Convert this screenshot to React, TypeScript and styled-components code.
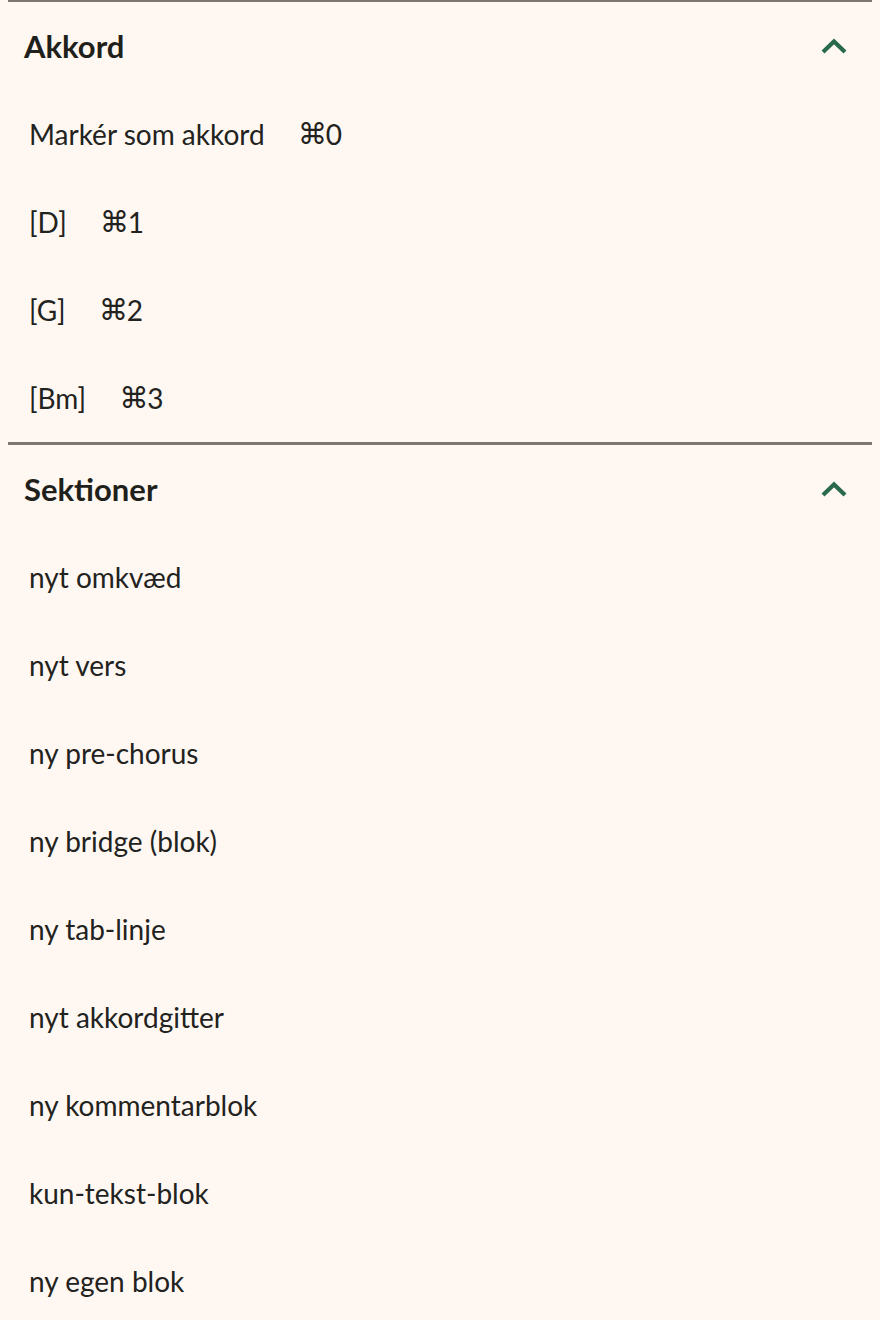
import React from 'react'
import styled, { createGlobalStyle } from 'styled-components'

const GlobalStyle = createGlobalStyle`
  html, body {
    background: #fff8f2;
  }
  body {
    margin: -1px 8px 0;
    font-family: Lato, "Noto Sans", "DejaVu Sans", sans-serif;
    color: #1f1f1b;
  }
`

const Section = styled.section`
  border-top: 3px solid #7d776f;
`

const Header = styled.button`
  display: flex;
  align-items: center;
  justify-content: space-between;
  width: 100%;
  height: 88px;
  padding: 0 24px 0 16px;
  border: none;
  background: transparent;
  font-family: inherit;
  font-size: 31px;
  font-weight: 700;
  color: #1f1f1b;
  cursor: pointer;
`

const List = styled.ul`
  list-style: none;
  margin: 0;
  padding: 0;
`

const Item = styled.li`
  display: flex;
  align-items: center;
  gap: 33px;
  height: 88px;
  padding-left: 21px;
  font-size: 28px;
  color: #222220;
`

const Shortcut = styled.span`
  display: inline-flex;
  align-items: center;
`

const Cmd = styled.span`
  font-family: "DejaVu Sans", sans-serif;
  font-size: 29px;
  line-height: 1;
  margin-right: -1px;
`

const Chevron = () => (
  <svg width="28" height="16" viewBox="0 0 28 16" fill="none">
    <polyline points="3,14 14,3.5 25,14" stroke="#2a6a4c" strokeWidth="4.2" strokeLinejoin="miter" />
  </svg>
)

type Entry = { label: string; key?: string }

const chords: Entry[] = [
  { label: 'Markér som akkord', key: '0' },
  { label: '[D]', key: '1' },
  { label: '[G]', key: '2' },
  { label: '[Bm]', key: '3' },
]

const sections: Entry[] = [
  { label: 'nyt omkvæd' },
  { label: 'nyt vers' },
  { label: 'ny pre-chorus' },
  { label: 'ny bridge (blok)' },
  { label: 'ny tab-linje' },
  { label: 'nyt akkordgitter' },
  { label: 'ny kommentarblok' },
  { label: 'kun-tekst-blok' },
  { label: 'ny egen blok' },
]

function Group({ title, entries }: { title: string; entries: Entry[] }) {
  return (
    <Section>
      <Header>
        <span>{title}</span>
        <Chevron />
      </Header>
      <List>
        {entries.map((e) => (
          <Item key={e.label}>
            <span>{e.label}</span>
            {e.key && (
              <Shortcut>
                <Cmd>⌘</Cmd>
                {e.key}
              </Shortcut>
            )}
          </Item>
        ))}
      </List>
    </Section>
  )
}

export default function App() {
  return (
    <>
      <GlobalStyle />
      <Group title="Akkord" entries={chords} />
      <Group title="Sektioner" entries={sections} />
    </>
  )
}
